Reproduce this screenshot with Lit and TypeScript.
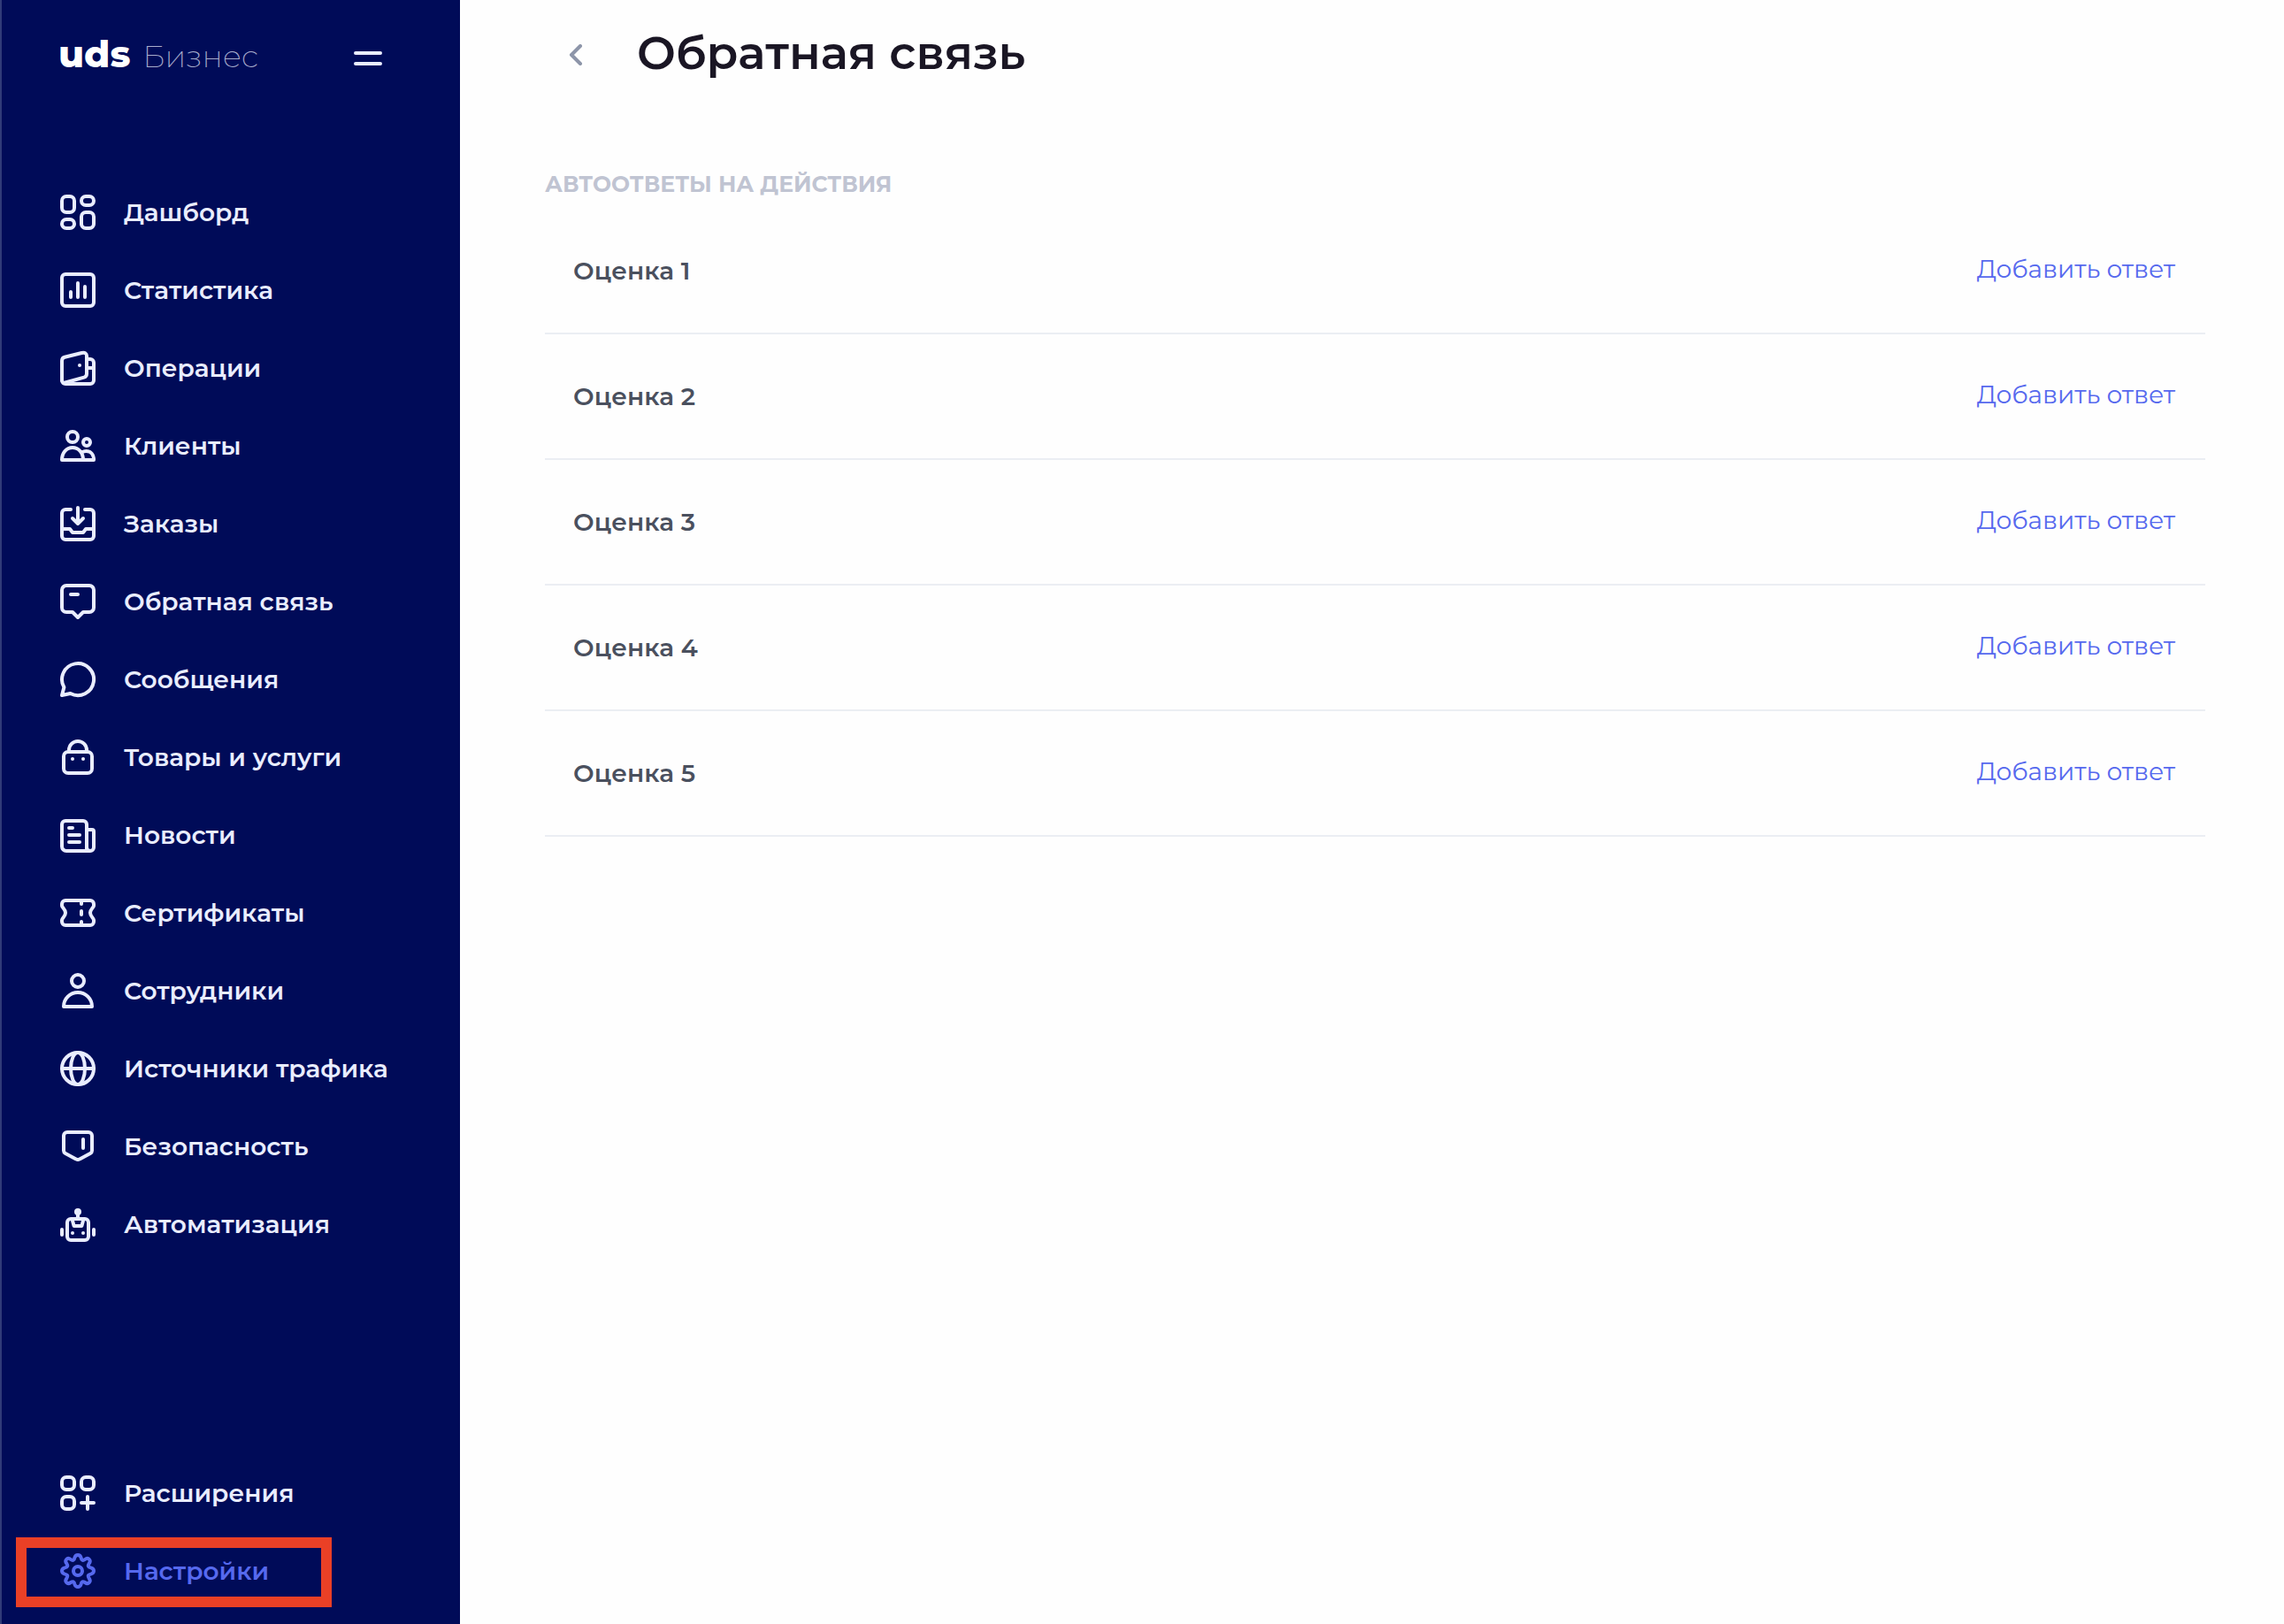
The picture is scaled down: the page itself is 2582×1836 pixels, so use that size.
import { LitElement, html, css, svg, type SVGTemplateResult } from "lit";
import { customElement, property } from "lit/decorators.js";

const icons: Record<string, SVGTemplateResult> = {
  dashboard: svg`<rect x="3" y="3" width="7" height="9" rx="2.5"/><rect x="14" y="3" width="7" height="5" rx="2.5"/><rect x="3" y="16" width="7" height="5" rx="2.5"/><rect x="14" y="12" width="7" height="9" rx="2.5"/>`,
  stats: svg`<rect x="3" y="3" width="18" height="18" rx="2"/><path d="M8 13v3M12 8v8M16 10v6"/>`,
  wallet: svg`<path d="M3 19V8Q3 6.300 4.600 5.900L14.200 3.500Q17 3 17 5.200V15.200Q17 16.800 15.500 17.300L4 20.500"/><path d="M17.500 7H19a2 2 0 0 1 2 2v10a2 2 0 0 1-2 2H5a2 2 0 0 1-2-2M18 12h3"/><circle class="dot" cx="13" cy="10.500" r="1"/>`,
  clients: svg`<circle cx="9" cy="7" r="3"/><circle cx="17" cy="10" r="2"/><path d="M3 20c0-4 2.500-7 6-7s6 3 6 7zM14.300 15.800c.7-.5 1.600-.8 2.500-.8 2.500 0 4.200 2 4.200 5h-6"/>`,
  orders: svg`<path d="M8 4H5a2 2 0 0 0-2 2v13a2 2 0 0 0 2 2h14a2 2 0 0 0 2-2V6a2 2 0 0 0-2-2h-3"/><path d="M12 3v8M9 9l3 3 3-3M3 15h4.500l1.500 2h6l1.500-2H21"/>`,
  feedback: svg`<path d="M5.500 3h13A2.500 2.500 0 0 1 21 5.500v10a2.500 2.500 0 0 1-2.500 2.500H15l-3 3-3-3H5.500A2.500 2.500 0 0 1 3 15.500v-10A2.500 2.500 0 0 1 5.500 3zM8 8h4"/>`,
  messages: svg`<path d="M4.200 16.500A9 9 0 1 1 7.800 20L3 21z"/>`,
  goods: svg`<rect x="4" y="9" width="16" height="12" rx="2.500"/><path d="M7 9V8a5 5 0 0 1 10 0v1"/><circle class="dot" cx="9" cy="13" r="1"/><circle class="dot" cx="15" cy="13" r="1"/>`,
  news: svg`<path d="M5 4h10a2 2 0 0 1 2 2v15H5.500A2.500 2.500 0 0 1 3 18.500V6a2 2 0 0 1 2-2zM17 9h3a1 1 0 0 1 1 1v9a2 2 0 0 1-4 0M17 21h2"/><path d="M7 8h2M7 12h6M7 16h6"/>`,
  tickets: svg`<path d="M3 7a2 2 0 0 1 2-2h14a2 2 0 0 1 2 2v1c0 1-2 1.900-2 4s2 3 2 4v1a2 2 0 0 1-2 2H5a2 2 0 0 1-2-2v-1c0-1 2-1.900 2-4s-2-3-2-4z"/><path d="M14 6v1M14 11v2M14 17v1"/>`,
  staff: svg`<circle cx="12" cy="6.500" r="3.500"/><path d="M4 21a8 8 0 0 1 16 0z"/>`,
  traffic: svg`<circle cx="12" cy="12" r="9"/><ellipse cx="12" cy="12" rx="4" ry="9"/><path d="M3 12h18"/>`,
  security: svg`<path d="M6 4h12a2 2 0 0 1 2 2v8.500q0 .9-1 1.500l-6 3.200q-1 .6-2 0L5 16q-1-.6-1-1.500V6a2 2 0 0 1 2-2zM15 8v5"/>`,
  robot: svg`<rect x="6" y="9" width="12" height="12" rx="2"/><path d="M12 5v4M9 10l.8 3h4.400l.8-3M3 15v3M21 15v3"/><circle class="dot" cx="12" cy="5" r="2"/><circle class="dot" cx="9" cy="17" r="1"/><circle class="dot" cx="15" cy="17" r="1"/>`,
  extensions: svg`<rect x="3" y="3" width="7" height="7" rx="2.500"/><rect x="14" y="3" width="7" height="7" rx="2.500"/><rect x="3" y="14" width="7" height="7" rx="2.500"/><path d="M17.500 14v7M14 17.500h7"/>`,
  settings: svg`<circle cx="12" cy="12" r="2.500"/><path d="M10.200 4.500C10.500 3.500 11 3 12 3s1.500.5 1.800 1.500c.3 1.500 1 1.900 2.200 1 1-.8 1.800-.8 2.400-.1.700.7.700 1.400-.1 2.500-.8 1.200-.5 2 1 2.300C20.500 10.500 21 11 21 12s-.5 1.500-1.700 1.800c-1.500.3-1.800 1-1 2.300.8 1.100.8 1.800.1 2.500-.6.600-1.400.6-2.400-.1-1.200-.8-1.900-.5-2.200 1C13.500 20.500 13 21 12 21s-1.500-.5-1.800-1.500c-.3-1.500-1-1.800-2.200-1-1 .7-1.800.7-2.400.1-.7-.7-.7-1.400.1-2.500.8-1.300.5-2-1-2.300C3.500 13.500 3 13 3 12s.5-1.500 1.700-1.800c1.500-.3 1.800-1.100 1-2.300-.8-1.100-.8-1.800-.1-2.500.6-.7 1.400-.7 2.400.1 1.200.9 1.900.5 2.200-1z"/>`,
};

interface NavItem {
  icon: string;
  label: string;
  active?: boolean;
}

const mainItems: NavItem[] = [
  { icon: "dashboard", label: "Дашборд" },
  { icon: "stats", label: "Статистика" },
  { icon: "wallet", label: "Операции" },
  { icon: "clients", label: "Клиенты" },
  { icon: "orders", label: "Заказы" },
  { icon: "feedback", label: "Обратная связь" },
  { icon: "messages", label: "Сообщения" },
  { icon: "goods", label: "Товары и услуги" },
  { icon: "news", label: "Новости" },
  { icon: "tickets", label: "Сертификаты" },
  { icon: "staff", label: "Сотрудники" },
  { icon: "traffic", label: "Источники трафика" },
  { icon: "security", label: "Безопасность" },
  { icon: "robot", label: "Автоматизация" },
];

const footerItems: NavItem[] = [
  { icon: "extensions", label: "Расширения" },
  { icon: "settings", label: "Настройки", active: true },
];

@customElement("nav-list")
class NavList extends LitElement {
  @property({ attribute: false }) items: NavItem[] = [];

  static styles = css`
    :host { display: block; }
    .list { list-style: none; margin: 0; padding: 0; }
    .link {
      position: relative;
      display: flex;
      align-items: center;
      gap: 28px;
      height: 88px;
      padding-left: 62px;
      color: #e9edff;
      font-size: 28px;
      font-weight: 600;
      line-height: 36px;
      text-decoration: none;
      white-space: nowrap;
    }
    .active { color: #5669ee; }
    .active::before {
      content: "";
      position: absolute;
      inset: 6px auto 3px 16px;
      width: 357px;
      box-sizing: border-box;
      border: 12px solid #ea4026;
    }
    .icon {
      flex: none;
      width: 48px;
      height: 48px;
      fill: none;
      stroke: currentColor;
      stroke-width: 2;
      stroke-linecap: round;
      stroke-linejoin: round;
    }
    .dot { fill: currentColor; stroke: none; }
  `;

  render() {
    return html`<ul class="list">
      ${this.items.map(
        (item) => html`<li>
          <a class="link ${item.active ? "active" : ""}" href="#${item.icon}">
            <svg class="icon" viewBox="0 0 24 24" aria-hidden="true">${icons[item.icon]}</svg>
            <span>${item.label}</span>
          </a>
        </li>`
      )}
    </ul>`;
  }
}

@customElement("app-root")
class AppRoot extends LitElement {
  static styles = css`
    :host {
      display: flex;
      min-height: 100vh;
      background: #fefefe;
      font-family: Montserrat, Inter, "Open Sans", sans-serif;
    }
    .sidebar {
      flex: none;
      display: flex;
      flex-direction: column;
      box-sizing: border-box;
      width: 520px;
      padding-bottom: 16px;
      border-left: 2px solid #303b78;
      background: #000b58;
    }
    .brand {
      display: flex;
      align-items: center;
      justify-content: space-between;
      height: 132px;
      padding: 0 88px 0 64px;
      margin-bottom: 64px;
    }
    .logo {
      display: flex;
      align-items: baseline;
      gap: 14px;
      padding-bottom: 8px;
      color: #fff;
      text-decoration: none;
      line-height: 48px;
    }
    .name { font-size: 42px; font-weight: 800; }
    .product { font-size: 35px; font-weight: 200; color: #a9adcd; }
    .toggle, .back, .add {
      border: 0;
      background: none;
      font: inherit;
      cursor: pointer;
    }
    .toggle {
      display: flex;
      flex-direction: column;
      gap: 8px;
      padding: 0;
    }
    .bar { width: 32px; height: 4px; border-radius: 2px; background: #e9edff; }
    .bottom { margin-top: auto; }
    .content { flex: 1; min-width: 0; padding: 0 89px 0 96px; }
    .header {
      display: flex;
      align-items: center;
      gap: 32px;
      height: 120px;
    }
    .back { display: flex; justify-content: center; width: 72px; padding: 14px 2px 10px 0; }
    .chevron {
      width: 16px;
      height: 24px;
      fill: none;
      stroke: #8d95a9;
      stroke-width: 4;
      stroke-linecap: round;
      stroke-linejoin: round;
    }
    .title {
      margin: 0;
      color: #1a1624;
      font-size: 52px;
      font-weight: 600;
      line-height: 64px;
    }
    .caption {
      margin: 72px 0 12px;
      color: #c0c4d2;
      font-size: 25px;
      font-weight: 700;
      line-height: 32px;
      text-transform: uppercase;
    }
    .rows { list-style: none; margin: 0; padding: 0; }
    .row {
      display: flex;
      align-items: center;
      justify-content: space-between;
      height: 140px;
      padding: 0 34px 0 32px;
      border-bottom: 2px solid #ebeef3;
      color: #4a505e;
      font-size: 28px;
      font-weight: 600;
      line-height: 36px;
    }
    .add { padding: 0 0 4px; color: #5669ee; font-weight: 400; }
  `;

  render() {
    return html`
      <aside class="sidebar">
        <div class="brand">
          <a class="logo" href="#home"><span class="name">uds</span><span class="product">Бизнес</span></a>
          <button class="toggle" aria-label="Меню"><span class="bar"></span><span class="bar"></span></button>
        </div>
        <nav-list .items=${mainItems}></nav-list>
        <nav-list class="bottom" .items=${footerItems}></nav-list>
      </aside>
      <main class="content">
        <header class="header">
          <button class="back" aria-label="Назад">
            <svg class="chevron" viewBox="0 0 16 24" aria-hidden="true"><path d="M13 2L3 12l10 10"/></svg>
          </button>
          <h1 class="title">Обратная связь</h1>
        </header>
        <h2 class="caption">Автоответы на действия</h2>
        <ul class="rows">
          ${[1, 2, 3, 4, 5].map(
            (score) => html`<li class="row">
              <span>Оценка ${score}</span>
              <button class="add">Добавить ответ</button>
            </li>`
          )}
        </ul>
      </main>
    `;
  }
}
